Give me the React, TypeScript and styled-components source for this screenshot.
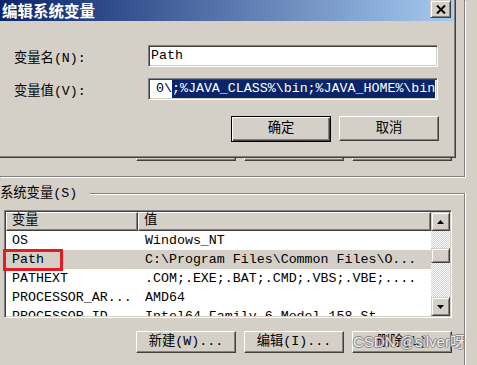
import React from "react";
import styled, { createGlobalStyle } from "styled-components";

const GlobalStyle = createGlobalStyle`
  html, body {
    margin: 0;
    padding: 0;
  }
  body {
    width: 477px;
    height: 365px;
    overflow: hidden;
    background: #d4d0c8;
    color: #000;
    font-family: "Liberation Mono", "Noto Sans CJK SC", monospace;
    font-size: 13.3px;
  }
`;

const Screen = styled.div`
  position: relative;
  width: 477px;
  height: 365px;
  overflow: hidden;
  box-sizing: border-box;
  padding-right: 12px;
  display: flex;
  flex-direction: column;
`;

/* background window: user variables group, mostly hidden by the dialog */
const UserGroup = styled.div`
  height: 177px;
  box-sizing: border-box;
  border-right: 1px solid #808080;
  border-bottom: 1px solid #808080;
  box-shadow: 1px 1px 0 #fff;
  padding: 0 12px 15px 0;
  display: flex;
  flex-direction: column;
  justify-content: flex-end;
`;

const ButtonRow = styled.div<{ $gap?: number }>`
  display: flex;
  justify-content: flex-end;
  gap: ${(p) => p.$gap ?? 8}px;
`;

const Button = styled.div<{ $h?: number; $default?: boolean }>`
  width: 100px;
  height: ${(p) => p.$h ?? 22}px;
  box-sizing: border-box;
  display: flex;
  align-items: center;
  justify-content: center;
  background: #d4d0c8;
  border: 1px solid;
  border-color: ${(p) => (p.$default ? "#000" : "#fff #404040 #404040 #fff")};
  box-shadow: ${(p) =>
    p.$default
      ? "inset 1px 1px #fff, inset -1px -1px #404040, inset -2px -2px #808080"
      : "inset -1px -1px #808080, inset 1px 1px #d4d0c8"};
  line-height: 1;
  white-space: pre;
`;

const SystemGroup = styled.div`
  display: flex;
  flex-direction: column;
  flex: 1;
`;

const GroupHeader = styled.div`
  display: flex;
  margin-top: 9px;
  height: 16px;
`;

const GroupLabel = styled.span`
  line-height: 16px;
`;

const GroupLine = styled.div`
  flex: 1;
  margin: 7px 0 0 13px;
  border-top: 1px solid #808080;
  border-right: 1px solid #808080;
  box-shadow: inset 0 1px #fff, 1px 0 #fff;
`;

const GroupBody = styled.div`
  flex: 1;
  border-right: 1px solid #808080;
  box-shadow: 1px 0 #fff;
  padding: 8px 12px 0 4px;
  display: flex;
  flex-direction: column;
  gap: 13px;
`;

const ListBox = styled.div`
  height: 108px;
  box-sizing: border-box;
  display: flex;
  background: #fff;
  border: 1px solid;
  border-color: #808080 #fff #fff #808080;
  box-shadow: inset 1px 1px #404040, inset -1px -1px #d4d0c8;
  padding: 1px;
`;

const ListContent = styled.div`
  flex: 1;
  clip-path: inset(-10px -10px 0 -10px);
`;

const HeaderRow = styled.div`
  display: flex;
  height: 19px;
`;

const HeaderCell = styled.div<{ $w?: number }>`
  ${(p) => (p.$w ? `width: ${p.$w}px;` : "flex: 1;")}
  box-sizing: border-box;
  background: #d4d0c8;
  border: 1px solid;
  border-color: #fff #404040 #404040 #fff;
  box-shadow: inset -1px -1px #808080;
  padding-left: 5px;
  line-height: 16px;
`;

const Row = styled.div<{ $sel?: boolean }>`
  position: relative;
  display: flex;
  height: 19px;
  line-height: 19px;
  background: ${(p) => (p.$sel ? "#d4d0c8" : "transparent")};
  white-space: pre;
`;

const Cell = styled.div<{ $w?: number }>`
  ${(p) => (p.$w ? `width: ${p.$w}px;` : "flex: 1;")}
  box-sizing: border-box;
  padding-left: ${(p) => (p.$w ? 6 : 7)}px;
  overflow: hidden;
`;

const Marker = styled.div`
  position: absolute;
  left: -3px;
  top: -1px;
  width: 60px;
  height: 22px;
  box-sizing: border-box;
  border: 3px solid #e31b23;
`;

const ScrollBar = styled.div`
  width: 19px;
  display: flex;
  flex-direction: column;
`;

const ScrollButton = styled.div<{ $h: number }>`
  height: ${(p) => p.$h}px;
  box-sizing: border-box;
  display: flex;
  align-items: center;
  justify-content: center;
  background: #d4d0c8;
  border: 1px solid;
  border-color: #d4d0c8 #404040 #404040 #d4d0c8;
  box-shadow: inset 1px 1px #fff, inset -1px -1px #808080;
`;

const Track = styled.div`
  flex: 1;
  background-color: #fff;
  background-image: repeating-conic-gradient(#d4d0c8 0 25%, #fff 0 50%);
  background-size: 2px 2px;
`;

const Thumb = styled(ScrollButton)`
  margin-top: 17px;
`;

/* the edit dialog lying over the background window */
const Dialog = styled.div`
  position: absolute;
  left: 0;
  top: 0;
  width: 456px;
  height: 158px;
  box-sizing: border-box;
  background: #d4d0c8;
  border-right: 1px solid #404040;
  border-bottom: 1px solid #404040;
  box-shadow: inset -1px -1px #808080;
  padding: 0 2px 0 0;
  display: flex;
  flex-direction: column;
`;

const TitleBar = styled.div`
  height: 21px;
  display: flex;
  justify-content: space-between;
  align-items: flex-start;
  background: linear-gradient(to right, #0a246a, #a6caf0);
`;

const Title = styled.span`
  padding-left: 2px;
  color: #fff;
  font-family: "Noto Sans CJK SC", sans-serif;
  font-weight: bold;
  font-size: 15.5px;
  line-height: 20px;
`;

const CloseButton = styled(ScrollButton)`
  width: 21px;
  margin-right: 2px;
`;

const DialogBody = styled.div`
  padding: 24px 0 0 14px;
  display: grid;
  grid-template-columns: 134px 290px;
  row-gap: 11px;
  align-items: center;
`;

const FieldLabel = styled.span`
  white-space: pre;
`;

const Field = styled.div`
  height: 22px;
  box-sizing: border-box;
  background: #fff;
  border: 1px solid;
  border-color: #808080 #fff #fff #808080;
  box-shadow: inset 1px 1px #404040, inset -1px -1px #d4d0c8;
  padding: 1px 2px 1px 2px;
  display: flex;
  line-height: 18px;
  white-space: pre;
  overflow: hidden;
`;

const Plain = styled.span<{ $pad?: number }>`
  padding-left: ${(p) => p.$pad ?? 0}px;
`;

const Selected = styled.span`
  background: #0a246a;
  color: #fff;
`;

const DialogButtons = styled(ButtonRow)`
  grid-column: 1 / span 2;
  margin: 5px -1px 0 0;
`;

const Watermark = styled.div`
  position: absolute;
  left: 353px;
  top: 330px;
  font-family: "Liberation Sans", "Noto Sans CJK SC", sans-serif;
  font-size: 15px;
  color: rgba(255, 255, 255, 0.92);
  text-shadow: 1px 0 0 #7c7c7c, -1px 0 0 #7c7c7c, 0 1px 0 #7c7c7c,
    0 -1px 0 #7c7c7c;
  opacity: 0.85;
  white-space: pre;
`;

const Arrow = ({ up }: { up?: boolean }) => (
  <svg width="7" height="4" viewBox="0 0 7 4">
    <polygon points={up ? "3.5,0 7,4 0,4" : "0,0 7,0 3.5,4"} fill="#000" />
  </svg>
);

const CloseIcon = () => (
  <svg width="10" height="9" viewBox="0 0 10 9">
    <path d="M1 0.5 L9 8.5 M9 0.5 L1 8.5" stroke="#000" strokeWidth="2" />
  </svg>
);

const rows = [
  { name: "OS", value: "Windows_NT" },
  { name: "Path", value: "C:\\Program Files\\Common Files\\O...", sel: true },
  { name: "PATHEXT", value: ".COM;.EXE;.BAT;.CMD;.VBS;.VBE;...." },
  { name: "PROCESSOR_AR...", value: "AMD64" },
  { name: "PROCESSOR_ID...", value: "Intel64 Family 6 Model 158 St..." },
];

export default function App() {
  return (
    <>
      <GlobalStyle />
      <Screen>
        <UserGroup>
          <ButtonRow>
            <Button $h={23}>新建(N)...</Button>
            <Button $h={23}>编辑(E)...</Button>
            <Button $h={23}>删除(D)</Button>
          </ButtonRow>
        </UserGroup>

        <SystemGroup>
          <GroupHeader>
            <GroupLabel>系统变量(S)</GroupLabel>
            <GroupLine />
          </GroupHeader>
          <GroupBody>
            <ListBox>
              <ListContent>
                <HeaderRow>
                  <HeaderCell $w={132}>变量</HeaderCell>
                  <HeaderCell>值</HeaderCell>
                </HeaderRow>
                {rows.map((r) => (
                  <Row key={r.name} $sel={r.sel}>
                    <Cell $w={132}>{r.name}</Cell>
                    <Cell>{r.value}</Cell>
                    {r.sel && <Marker />}
                  </Row>
                ))}
              </ListContent>
              <ScrollBar>
                <ScrollButton $h={19}>
                  <Arrow up />
                </ScrollButton>
                <Track>
                  <Thumb $h={15} />
                </Track>
                <ScrollButton $h={19}>
                  <Arrow />
                </ScrollButton>
              </ScrollBar>
            </ListBox>
            <ButtonRow>
              <Button>新建(W)...</Button>
              <Button>编辑(I)...</Button>
              <Button>删除(L)</Button>
            </ButtonRow>
          </GroupBody>
        </SystemGroup>

        <Dialog>
          <TitleBar>
            <Title>编辑系统变量</Title>
            <CloseButton $h={18}>
              <CloseIcon />
            </CloseButton>
          </TitleBar>
          <DialogBody>
            <FieldLabel>变量名(N):</FieldLabel>
            <Field>Path</Field>
            <FieldLabel>变量值(V):</FieldLabel>
            <Field>
              <Plain $pad={5}>0\</Plain>
              <Selected>;%JAVA_CLASS%\bin;%JAVA_HOME%\bin</Selected>
            </Field>
            <DialogButtons>
              <Button $h={26} $default>
                确定
              </Button>
              <Button $h={25}>取消</Button>
            </DialogButtons>
          </DialogBody>
        </Dialog>

        <Watermark>CSDN @silver呀</Watermark>
      </Screen>
    </>
  );
}
